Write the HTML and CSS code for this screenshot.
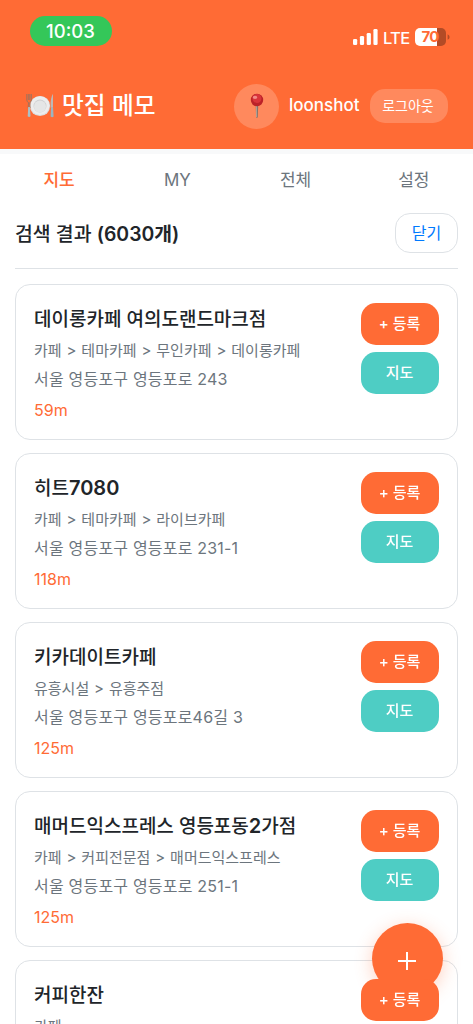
FILE: index.html
```html
<!DOCTYPE html>
<html lang="ko">
<head>
<meta charset="utf-8">
<meta name="viewport" content="width=device-width, initial-scale=1">
<title>맛집 메모</title>
<link rel="stylesheet" href="styles.css">
</head>
<body>
<header class="header">
  <div class="status">
    <span class="clock">10:03</span>
    <div class="indicators">
      <svg class="signal" width="25" height="16" viewBox="0 0 25 16" fill="#fff"><rect x="0" y="10" width="4.2" height="6" rx="1.3"/><rect x="6.9" y="7" width="4.2" height="9" rx="1.3"/><rect x="13.7" y="4" width="4.2" height="12" rx="1.3"/><rect x="20.4" y="0" width="4.2" height="16" rx="1.3"/></svg>
      <span class="network">LTE</span>
      <svg class="battery" width="35" height="18" viewBox="0 0 35 18"><path d="M22 0h4a5 5 0 0 1 5 5v8a5 5 0 0 1-5 5h-4z" fill="#b34b26"/><path d="M5 0h17v18H5a5 5 0 0 1-5-5V5a5 5 0 0 1 5-5z" fill="#fff"/><path d="M32.6 6.2q2 .9 2 2.8t-2 2.8z" fill="#b34b26"/><text class="charge" x="6.5" y="14.4">70</text></svg>
    </div>
  </div>
  <div class="bar">
    <h1 class="brand">
      <svg width="28" height="26" viewBox="0 0 28 26">
        <circle cx="14" cy="13" r="10.1" fill="#dcddde"/><circle cx="14" cy="12.6" r="9.4" fill="#ededed"/><circle cx="14" cy="13" r="6.5" fill="#cfd0d1"/><circle cx="14" cy="13.4" r="6" fill="#e5e6e6"/>
        <path d="M.8 1v6q0 2 1.7 2.5L2.2 15h1.9l-.3-5.5Q5.3 9 5.3 7V1M2.3 1v6M3.8 1v6" fill="none" stroke="#98735f" stroke-width=".9"/><path d="M2.2 14h1.7l.6 9.2q-1.2 1.6-2.8 0z" fill="#a9c0c7"/>
        <path d="M27 .8v14h-2.4q-.4-10 2.4-14z" fill="#bdb8b5"/><path d="M25 14.5h2l.6 9q-1.5 1.5-3 0z" fill="#9bb5c0"/>
      </svg>
      <span>맛집 메모</span>
    </h1>
    <div class="account">
      <div class="avatar">
        <svg width="14" height="26" viewBox="0 0 14 26"><path d="M5.7 12h2.5l-.4 12q-.9 2-1.7 0z" fill="#83756c"/><path d="M6.5 12v12" stroke="#b6aaa0" stroke-width=".8"/><circle cx="7" cy="7" r="6.2" fill="#bb2228"/><circle cx="7" cy="5.5" r="4.5" fill="#d9343a"/><ellipse cx="5" cy="4.3" rx="2.3" ry="1.6" fill="#f38b87"/></svg>
      </div>
      <span class="user">loonshot</span>
      <button class="logout">로그아웃</button>
    </div>
  </div>
</header>
<nav class="tabs"><a class="tab active">지도</a><a class="tab">MY</a><a class="tab">전체</a><a class="tab">설정</a></nav>
<main class="results">
  <div class="results-head">
    <h2 class="count">검색 결과 <span class="count-num">(6030개)</span></h2>
    <button class="close">닫기</button>
  </div>
  <article class="card">
    <div class="info"><h3 class="name">데이롱카페 여의도랜드마크점</h3><p class="category">카페 &gt; 테마카페 &gt; 무인카페 &gt; 데이롱카페</p><p class="address">서울 영등포구 영등포로 243</p><p class="distance">59m</p></div>
    <div class="actions"><button class="btn add">+ 등록</button><button class="btn map">지도</button></div>
  </article>
  <article class="card">
    <div class="info"><h3 class="name">히트<span class="num">7080</span></h3><p class="category">카페 &gt; 테마카페 &gt; 라이브카페</p><p class="address">서울 영등포구 영등포로 231-1</p><p class="distance">118m</p></div>
    <div class="actions"><button class="btn add">+ 등록</button><button class="btn map">지도</button></div>
  </article>
  <article class="card">
    <div class="info"><h3 class="name">키카데이트카페</h3><p class="category">유흥시설 &gt; 유흥주점</p><p class="address">서울 영등포구 영등포로46길 3</p><p class="distance">125m</p></div>
    <div class="actions"><button class="btn add">+ 등록</button><button class="btn map">지도</button></div>
  </article>
  <article class="card">
    <div class="info"><h3 class="name">매머드익스프레스 영등포동<span class="num">2</span>가점</h3><p class="category">카페 &gt; 커피전문점 &gt; 매머드익스프레스</p><p class="address">서울 영등포구 영등포로 251-1</p><p class="distance">125m</p></div>
    <div class="actions"><button class="btn add">+ 등록</button><button class="btn map">지도</button></div>
  </article>
  <article class="card">
    <div class="info"><h3 class="name">커피한잔</h3><p class="category">카페</p></div>
    <div class="actions"><button class="btn add">+ 등록</button></div>
  </article>
</main>
<button class="fab" aria-label="추가"><svg width="20" height="20" viewBox="0 0 20 20"><path d="M10 1v18M1 10h18" stroke="#fff" stroke-width="2"/></svg></button>
</body>
</html>
```
FILE: styles.css
```css
* { box-sizing: border-box; margin: 0; padding: 0; }
body {
  height: 1024px;
  overflow: hidden;
  background: #f8f9fa;
  font-family: Inter, "Noto Sans CJK KR", sans-serif;
  color: #212529;
}
button { border: 0; font-family: inherit; white-space: nowrap; }
.header { height: 149px; background: #ff6b35; color: #fff; }
.status { height: 75px; padding: 16px 23px 0 30px; display: flex; justify-content: space-between; }
.clock {
  width: 82px; height: 30px; padding-right: 1px; border-radius: 15px;
  background: #34c759;
  font-size: 18.5px; line-height: 30px; font-weight: 500; text-align: center;
}
.indicators { display: flex; align-items: center; height: 18px; margin-top: 12px; }
.network { width: 26px; margin: 1px 6px 0 5px; font-size: 16.5px; font-weight: 500; letter-spacing: -0.7px; line-height: 18px; }
.signal { margin-bottom: 1px; }
.charge { font-size: 15px; font-weight: 700; fill: #ff6b35; letter-spacing: -0.7px; }
.bar { height: 62px; padding: 0 25px 0 26px; display: flex; justify-content: space-between; align-items: center; }
.brand { display: flex; align-items: center; gap: 8px; font-size: 23.7px; font-weight: 500; line-height: 30px; }
.account { display: flex; align-items: center; }
.avatar { width: 45px; height: 45px; border-radius: 50%; background: #ff895d; display: flex; align-items: center; justify-content: center; }
.user { width: 71px; margin: 0 10px; padding-bottom: 2px; font-size: 17px; font-weight: 500; line-height: 24px; }
.logout { width: 78px; height: 34px; padding: 0 2px 2px 0; border-radius: 15px; background: #ff895d; color: #fff; font-size: 14px; }
.tabs { height: 55px; margin-top: 5px; background: #fff; display: grid; grid-template-columns: repeat(4, 1fr); }
.tab { font-size: 17px; line-height: 52px; text-align: center; color: #6c757d; }
.tab.active { color: #ff6b35; font-weight: 500; }
.results { height: 815px; padding: 0 15px; background: #fff; }
.results-head { height: 60px; margin-bottom: 15px; padding-top: 4px; border-bottom: 1px solid #dee2e6; display: flex; justify-content: space-between; }
.count { font-size: 19.4px; line-height: 43px; font-weight: 500; }
.count-num { font-weight: 600; }
.close { width: 63px; height: 40px; padding-bottom: 3px; border: 1px solid #dee2e6; border-radius: 15px; background: #fff; color: #007aff; font-size: 16px; }
.card { height: 156px; margin-bottom: 13px; padding: 18px; border: 1px solid #dee2e6; border-radius: 15px; background: #fff; display: flex; justify-content: space-between; }
.info { white-space: nowrap; }
.name { font-size: 19px; line-height: 33px; font-weight: 500; }
.num { font-size: 20px; line-height: 1; font-weight: 600; }
.category { font-size: 15px; line-height: 30px; word-spacing: 0.7px; color: #6c757d; }
.address { font-size: 16px; line-height: 26px; letter-spacing: 0.2px; color: #6c757d; }
.distance { margin-top: 6px; font-size: 16px; line-height: 24px; color: #ff6b35; }
.actions { position: relative; z-index: 2; display: flex; flex-direction: column; gap: 7px; }
.btn { width: 78px; height: 42px; padding: 0 1px 3px 0; border-radius: 15px; color: #fff; font-size: 15px; font-weight: 500; }
.add { background: #ff6b35; }
.map { background: #4ecdc4; }
.fab {
  position: fixed; right: 30px; bottom: 30px; z-index: 1;
  width: 71px; height: 71px; padding: 4px 2px 0 0; border-radius: 50%;
  background: #ff6b35; box-shadow: 0 4px 18px rgba(255, 107, 53, .3);
  display: flex; align-items: center; justify-content: center;
}
```
